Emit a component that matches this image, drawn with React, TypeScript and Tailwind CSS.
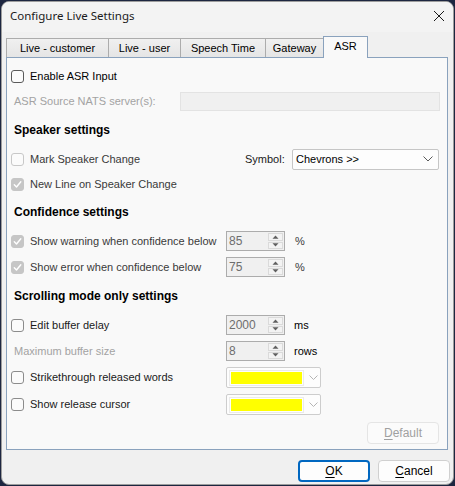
import React from "react";

const Check = () => (
  <svg width="9" height="9" viewBox="0 0 9 9" className="block">
    <path d="M1.3 4.8 L3.5 7 L7.8 1.8" fill="none" stroke="#ffffff" strokeWidth="1.4" strokeLinecap="round" strokeLinejoin="round" />
  </svg>
);

type CbProps = { variant: "dark" | "mid" | "disabled" | "disabledChecked" };
const Checkbox = ({ variant }: CbProps) => {
  if (variant === "disabledChecked")
    return (
      <div className="ml-[4px] w-[13px] h-[13px] rounded-[3px] bg-[#c6c6c6] border border-[#c6c6c6] flex items-center justify-center shrink-0">
        <Check />
      </div>
    );
  const cls =
    variant === "dark"
      ? "border-[#5a5a5a] bg-[#fbfbfb]"
      : variant === "mid"
      ? "border-[#8c8c8c] bg-[#fbfbfb]"
      : "border-[#c8c8c8] bg-[#fbfbfb]";
  return <div className={`ml-[4px] w-[13px] h-[13px] rounded-[3px] border shrink-0 ${cls}`} />;
};

const Tri = ({ up }: { up: boolean }) => (
  <svg width="7" height="4" viewBox="0 0 7 4" className="block">
    {up ? <path d="M0.5 3.8 L3.5 0.5 L6.5 3.8 Z" fill="#5f5f5f" /> : <path d="M0.5 0.2 L3.5 3.5 L6.5 0.2 Z" fill="#5f5f5f" />}
  </svg>
);

const Spinner = ({ value }: { value: string }) => (
  <div className="w-[59px] h-[20px] border border-[#acacac] bg-[#f0f0f0] flex shrink-0">
    <span className="flex-1 pl-[2px] text-[#6d6d6d] text-[12px] leading-[18px]">{value}</span>
    <div className="w-[15px] mr-[1px] my-[1px] flex flex-col gap-[1px]">
      <div className="flex-1 border border-[#dadada] bg-[#f3f3f3] flex items-center justify-center">
        <Tri up />
      </div>
      <div className="flex-1 border border-[#dadada] bg-[#f3f3f3] flex items-center justify-center">
        <Tri up={false} />
      </div>
    </div>
  </div>
);

const ColorDrop = () => (
  <div className="w-[95px] h-[21px] border border-[#cdcdcd] rounded-[2px] bg-[#fdfdfd] flex items-center shrink-0">
    <div className="ml-[2px] w-[75px] h-[16px] border border-[#ebebeb] p-[1px] flex">
      <div className="flex-1 bg-[#ffff00]" />
    </div>
    <svg width="9" height="5" viewBox="0 0 9 5" className="ml-[5px] block">
      <path d="M0.5 0.5 L4.5 4.5 L8.5 0.5" fill="none" stroke="#b4b4b4" strokeWidth="1" />
    </svg>
  </div>
);

const Heading = ({ children, mt }: { children: React.ReactNode; mt: string }) => (
  <div className={`h-[20px] flex items-center ${mt}`}>
    <span className="ml-[7px] font-bold text-[12px] text-black">{children}</span>
  </div>
);

export default function App() {
  return (
    <div className="w-[455px] h-[486px] bg-[#1d2640] overflow-hidden font-['Liberation_Sans',Arial,sans-serif] text-[11px]">
      <div className="ml-[1px] mt-[1px] w-[453px] h-[484px] rounded-[8px] border border-[#9d9d9d] bg-[#f0f0f0] overflow-hidden flex flex-col">
        {/* title bar */}
        <div className="h-[30px] bg-[#f3f3f3] flex items-start justify-between shrink-0">
          <span className="ml-[8px] mt-[5px] font-['Noto_Sans',sans-serif] text-[11.5px] leading-[17px] text-[#1a1a1a]">
            Configure Live Settings
          </span>
          <svg width="12" height="12" viewBox="0 0 12 12" className="mt-[8px] mr-[8px] block">
            <path d="M1 1 L11 11 M11 1 L1 11" stroke="#1a1a1a" strokeWidth="1" />
          </svg>
        </div>

        {/* tabs */}
        <div className="mt-[4px] ml-[4px] h-[21px] flex items-end relative z-10">
          {[
            { t: "Live - customer", w: "w-[103px]" },
            { t: "Live - user", w: "w-[73px]" },
            { t: "Speech Time", w: "w-[86px]" },
            { t: "Gateway", w: "w-[59px]" },
          ].map((tab, i) => (
            <div
              key={tab.t}
              className={`${tab.w} ${i > 0 ? "-ml-[1px]" : ""} h-[19px] border border-b-0 border-[#acacac] bg-gradient-to-b from-[#f0f0f0] to-[#e5e5e5] flex items-center justify-center text-black leading-none`}
            >
              {tab.t}
            </div>
          ))}
          <div className="-ml-[1px] w-[45px] h-[22px] -mb-[1px] border border-b-0 border-[#8aa2bd] bg-[#f9f9f9] flex items-center justify-center text-black leading-none pb-[3px]">
            ASR
          </div>
        </div>

        {/* panel */}
        <div className="ml-[4px] w-[442px] h-[393px] border border-[#8aa2bd] bg-[#f9f9f9] flex flex-col shrink-0">
          {/* Enable ASR */}
          <div className="h-[20px] flex items-center mt-[8px]">
            <Checkbox variant="dark" />
            <span className="ml-[6px] text-black">Enable ASR Input</span>
          </div>
          {/* ASR Source */}
          <div className="h-[20px] flex items-center mt-[5px]">
            <div className="w-[173px] shrink-0">
              <span className="ml-[7px] text-[#a3a3a3]">ASR Source NATS server(s):</span>
            </div>
            <div className="w-[260px] h-[19px] border border-[#e3e3e3] bg-[#f0f0f0]" />
          </div>

          <Heading mt="mt-[9px]">Speaker settings</Heading>

          {/* Mark speaker */}
          <div className="h-[20px] flex items-center mt-[9px]">
            <div className="w-[238px] shrink-0 flex items-center">
              <Checkbox variant="disabled" />
              <span className="ml-[6px] text-[#3a3a3a]">Mark Speaker Change</span>
            </div>
            <span className="w-[47px] shrink-0 text-[#1a1a1a]">Symbol:</span>
            <div className="w-[147px] h-[21px] border border-[#c6c6c6] rounded-[2px] bg-[#fdfdfd] flex items-center justify-between">
              <span className="ml-[3px] text-black">Chevrons &gt;&gt;</span>
              <svg width="10" height="6" viewBox="0 0 10 6" className="mr-[5px] block">
                <path d="M0.5 0.5 L5 5 L9.5 0.5" fill="none" stroke="#5a5a5a" strokeWidth="1" />
              </svg>
            </div>
          </div>
          {/* New line */}
          <div className="h-[20px] flex items-center mt-[5px]">
            <Checkbox variant="disabledChecked" />
            <span className="ml-[6px] text-[#3a3a3a]">New Line on Speaker Change</span>
          </div>

          <Heading mt="mt-[8px]">Confidence settings</Heading>

          <div className="h-[20px] flex items-center mt-[9px]">
            <div className="w-[219px] shrink-0 flex items-center">
              <Checkbox variant="disabledChecked" />
              <span className="ml-[6px] text-[#3a3a3a]">Show warning when confidence below</span>
            </div>
            <Spinner value="85" />
            <span className="ml-[10px] text-[#3a3a3a]">%</span>
          </div>
          <div className="h-[20px] flex items-center mt-[6px]">
            <div className="w-[219px] shrink-0 flex items-center">
              <Checkbox variant="disabledChecked" />
              <span className="ml-[6px] text-[#3a3a3a]">Show error when confidence below</span>
            </div>
            <Spinner value="75" />
            <span className="ml-[10px] text-[#3a3a3a]">%</span>
          </div>

          <Heading mt="mt-[9px]">Scrolling mode only settings</Heading>

          <div className="h-[20px] flex items-center mt-[9px]">
            <div className="w-[219px] shrink-0 flex items-center">
              <Checkbox variant="mid" />
              <span className="ml-[6px] text-[#1a1a1a]">Edit buffer delay</span>
            </div>
            <Spinner value="2000" />
            <span className="ml-[9px] text-black">ms</span>
          </div>
          <div className="h-[20px] flex items-center mt-[6px]">
            <div className="w-[219px] shrink-0">
              <span className="ml-[7px] text-[#a3a3a3]">Maximum buffer size</span>
            </div>
            <Spinner value="8" />
            <span className="ml-[9px] text-black">rows</span>
          </div>
          <div className="h-[21px] flex items-center mt-[6px]">
            <div className="w-[219px] shrink-0 flex items-center">
              <Checkbox variant="mid" />
              <span className="ml-[6px] text-[#1a1a1a]">Strikethrough released words</span>
            </div>
            <ColorDrop />
          </div>
          <div className="h-[21px] flex items-center mt-[6px]">
            <div className="w-[219px] shrink-0 flex items-center">
              <Checkbox variant="mid" />
              <span className="ml-[6px] text-[#1a1a1a]">Show release cursor</span>
            </div>
            <ColorDrop />
          </div>

          <div className="flex justify-end mt-[7px]">
            <div className="mr-[8px] w-[72px] h-[22px] rounded-[4px] border border-[#e5e5e5] bg-[#fbfbfb] flex items-center justify-center text-[#a0a0a0] text-[12px]">
              <span><u className="underline-offset-2">D</u>efault</span>
            </div>
          </div>
        </div>

        {/* buttons */}
        <div className="flex justify-end gap-[8px] mr-[3px] mt-[10px]">
          <div className="w-[72px] h-[22px] rounded-[4px] border-2 border-[#0067c0] bg-[#fdfdfd] flex items-center justify-center text-black text-[12px]">
            <span><u className="underline-offset-2">O</u>K</span>
          </div>
          <div className="w-[72px] h-[22px] rounded-[4px] border border-[#d0d0d0] bg-[#fdfdfd] flex items-center justify-center text-black text-[12px]">
            <span><u className="underline-offset-2">C</u>ancel</span>
          </div>
        </div>
      </div>
    </div>
  );
}
